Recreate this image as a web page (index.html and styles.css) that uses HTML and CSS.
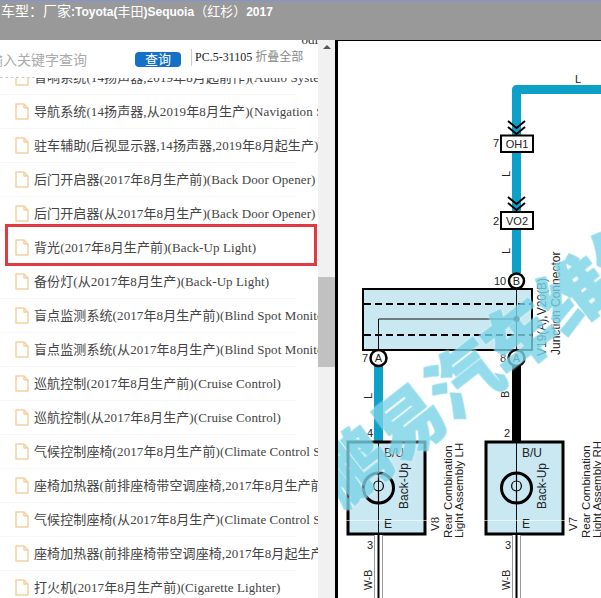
FILE: index.html
```html
<!DOCTYPE html>
<html>
<head>
	<meta http-equiv="Content-Type" content="text/html;charset=UTF-8" />
	<title>车型</title>
	<link rel="stylesheet" href="styles.css">
</head>
<body>
<svg class="defs" width="0" height="0">
	<symbol id="doc" viewBox="0 0 14 17">
		<path d="M1 1H9L13 5V16H1Z M9 1V5H13" fill="#fff" stroke="#f6cfa2" stroke-width="1.5" stroke-linejoin="round"/>
	</symbol>
</svg>
<div class="topbar">
	<div class="car-title">车型：厂家<b>:Toyota(</b><span class="cn">丰田</span><b>)Sequoia</b><span class="cn">（红杉）</span><b>2017</b></div>
</div>
<div class="main">
	<div class="side">
		<div class="side-inner">
			<div class="search">
				<span class="leftover">odi</span>
				<span class="keyword">输入关键字查询</span>
				<span class="btn-query">查询</span>
				<span class="page-code">PC.5-31105</span>
				<span class="fold-all">折叠全部</span>
			</div>
			<div class="list">
				<ul class="tree">
					<li><svg class="ico"><use href="#doc"/></svg>音响系统(14扬声器,2019年8月起前作)(Audio System)</li>
					<li><svg class="ico"><use href="#doc"/></svg>导航系统(14扬声器,从2019年8月生产)(Navigation System)</li>
					<li><svg class="ico"><use href="#doc"/></svg>驻车辅助(后视显示器,14扬声器,2019年8月起生产)</li>
					<li><svg class="ico"><use href="#doc"/></svg>后门开启器(2017年8月生产前)(Back Door Opener)</li>
					<li><svg class="ico"><use href="#doc"/></svg>后门开启器(从2017年8月生产)(Back Door Opener)</li>
					<li><svg class="ico"><use href="#doc"/></svg>背光(2017年8月生产前)(Back-Up Light)<span class="red-box"></span></li>
					<li><svg class="ico"><use href="#doc"/></svg>备份灯(从2017年8月生产)(Back-Up Light)</li>
					<li><svg class="ico"><use href="#doc"/></svg>盲点监测系统(2017年8月生产前)(Blind Spot Monitor)</li>
					<li><svg class="ico"><use href="#doc"/></svg>盲点监测系统(从2017年8月生产)(Blind Spot Monitor)</li>
					<li><svg class="ico"><use href="#doc"/></svg>巡航控制(2017年8月生产前)(Cruise Control)</li>
					<li><svg class="ico"><use href="#doc"/></svg>巡航控制(从2017年8月生产)(Cruise Control)</li>
					<li><svg class="ico"><use href="#doc"/></svg>气候控制座椅(2017年8月生产前)(Climate Control Seat)</li>
					<li><svg class="ico"><use href="#doc"/></svg>座椅加热器(前排座椅带空调座椅,2017年8月生产前)</li>
					<li><svg class="ico"><use href="#doc"/></svg>气候控制座椅(从2017年8月生产)(Climate Control Seat)</li>
					<li><svg class="ico"><use href="#doc"/></svg>座椅加热器(前排座椅带空调座椅,2017年8月起生产)</li>
					<li><svg class="ico"><use href="#doc"/></svg>打火机(2017年8月生产前)(Cigarette Lighter)</li>
				</ul>
			</div>
		</div>
		<div class="scrollbar">
			<div class="arrow"></div>
			<div class="thumb"></div>
		</div>
	</div>
	<div class="pane">
		<svg class="diagram" width="263" height="557" viewBox="338 41 263 557">
			<!-- wires -->
			<path class="w-blue" d="M601 89.5H516.5V273"/>
			<path class="w-blue" d="M378.5 366V442"/>
			<path class="w-black" d="M516.5 366V442"/>

			<!-- junction box -->
			<rect class="box-thin" x="363" y="289" width="169" height="61"/>
			<path class="dash" d="M364 304H531M364 335H531"/>
			<path class="thin" d="M516.5 289V350M516.5 319H378.5V350"/>
			<circle cx="516.5" cy="319" r="3"/>

			<!-- inline connectors -->
			<path class="chev" d="M508 121L516.5 128L525 121M508 127L516.5 134L525 127"/>
			<rect class="conn" x="501" y="135.5" width="32" height="16.5"/>
			<text class="t10" x="517" y="148" text-anchor="middle">OH1</text>
			<text class="t10" x="493" y="147">7</text>
			<path class="chev" d="M508 197L516.5 204L525 197M508 203L516.5 210L525 203"/>
			<rect class="conn" x="501" y="212" width="32" height="17"/>
			<text class="t10" x="517" y="224.5" text-anchor="middle">VO2</text>
			<text class="t10" x="493" y="224.5">2</text>
			<text class="t10" x="575" y="83">L</text>
			<text class="t10" transform="translate(510 177) rotate(-90)">L</text>
			<text class="t10" transform="translate(510 254) rotate(-90)">L</text>
			<text class="t10" transform="translate(372 399) rotate(-90)">L</text>
			<text class="t10" transform="translate(509 398) rotate(-90)">B</text>

			<!-- pins -->
			<circle class="pin" cx="516.5" cy="281" r="7.5"/>
			<text class="t10" x="516.5" y="285" text-anchor="middle">B</text>
			<text class="t10" x="494" y="285">10</text>
			<circle class="pin" cx="378.5" cy="358" r="8"/>
			<text class="t10" x="378.5" y="362" text-anchor="middle">A</text>
			<text class="t10" x="362" y="362">7</text>
			<circle class="pin" cx="516.5" cy="358" r="8"/>
			<text class="t10" x="516.5" y="362" text-anchor="middle">A</text>
			<text class="t10" x="500" y="362">8</text>

			<text class="t11" transform="translate(546 356) rotate(-90)">V19(A),V20(B)</text>
			<text class="t11" transform="translate(560 355) rotate(-90)">Junction Connector</text>

			<!-- lamps -->
			<g>
				<rect class="box" x="348" y="442" width="77" height="92"/>
				<path class="thin" d="M378.5 442V534"/>
				<circle class="lamp" cx="378.5" cy="488" r="15"/>
				<path class="fil" d="M378.5 473V481C372 481 372 491 378.5 491C385 491 385 481 378.5 481M378.5 491V503"/>
				<text class="t11" x="384" y="457">B/U</text>
				<text class="t11" x="384" y="528">E</text>
				<text class="t11" transform="translate(408 509) rotate(-90)">Back-Up</text>
				<path class="w-wb" d="M378.5 535V598"/>
				<path class="w-wb-gap" d="M378.5 535V598"/>
				<path class="w-wb-in" d="M378.5 535V598"/>
				<text class="t10" x="367" y="437">4</text>
				<text class="t10" x="367" y="549">3</text>
				<text class="t11 tsm" transform="translate(372 590) rotate(-90)">W-B</text>
				<text class="t12" transform="translate(439 531) rotate(-90)">V8</text>
				<text class="t12" transform="translate(452 538) rotate(-90)">Rear Combination</text>
				<text class="t12" transform="translate(463 538) rotate(-90)">Light Assembly LH</text>
			</g>
			<g>
				<rect class="box" x="486" y="442" width="77" height="92"/>
				<path class="thin" d="M516.5 442V534"/>
				<circle class="lamp" cx="516.5" cy="488" r="15"/>
				<path class="fil" d="M516.5 473V481C510 481 510 491 516.5 491C523 491 523 481 516.5 481M516.5 491V503"/>
				<text class="t11" x="522" y="457">B/U</text>
				<text class="t11" x="522" y="528">E</text>
				<text class="t11" transform="translate(546 509) rotate(-90)">Back-Up</text>
				<path class="w-wb" d="M516.5 535V598"/>
				<path class="w-wb-gap" d="M516.5 535V598"/>
				<path class="w-wb-in" d="M516.5 535V598"/>
				<text class="t10" x="505" y="549">3</text>
				<text class="t11 tsm" transform="translate(510 590) rotate(-90)">W-B</text>
				<text class="t10" x="504" y="437">2</text>
				<text class="t12" transform="translate(577 531) rotate(-90)">V7</text>
				<text class="t12" transform="translate(590 538) rotate(-90)">Rear Combination</text>
				<text class="t12" transform="translate(601 538) rotate(-90)">Light Assembly RH</text>
			</g>
			<path class="seam" d="M340 520.5H565"/>

			<!-- watermark -->
			<text class="mark" transform="translate(342 508) rotate(-38)">鹏易汽车维修</text>
		</svg>
	</div>
</div>
</body>
</html>
```

FILE: styles.css
```css
html, body {
	margin: 0;
	padding: 0;
	height: 100%;
	overflow: hidden;
	background: #fff;
}
.defs {
	position: absolute;
}
.topbar {
	height: 39px;
	background: #999;
	border-top: 1px solid #8393d8;
}
.car-title {
	padding: 1px 0 0 1px;
	font: 14px/18px "Liberation Sans", "Noto Sans CJK SC", sans-serif;
	color: #fff;
}
.car-title b {
	font-size: 12px;
}
.cn {
	font-size: 13px;
}
.main {
	display: flex;
	height: 558px;
}
.side {
	display: flex;
	width: 335px;
	flex: none;
}
.side-inner {
	width: 318px;
	overflow: hidden;
}
.search {
	position: relative;
	display: flex;
	align-items: center;
	height: 38px;
	overflow: hidden;
	font-family: "Liberation Serif", "Noto Sans CJK SC", serif;
}
.search::after {
	content: "";
	position: absolute;
	left: 0;
	bottom: 0;
	width: 35px;
	border-bottom: 1px dashed #ccc;
}
.leftover {
	position: absolute;
	top: -8px;
	right: 0;
	font-size: 13px;
	color: #333;
}
.keyword {
	margin-left: -11px;
	width: 146px;
	flex: none;
	font-size: 14px;
	color: #aaa;
}
.btn-query {
	width: 46px;
	height: 15px;
	flex: none;
	border-radius: 4px;
	background: #1571c7;
	color: #fff;
	font-size: 13px;
	line-height: 15px;
	text-align: center;
}
.page-code {
	margin: -4px 0 0 10px;
	padding-left: 3px;
	border-left: 1px solid #ccc;
	font-size: 12px;
	line-height: 17px;
	color: #222;
}
.fold-all {
	margin: -6px 0 0 3px;
	font-size: 12px;
	color: #888;
}
.list {
	height: 520px;
	overflow: hidden;
}
.tree {
	list-style: none;
	margin: -17px 0 0 0;
	padding: 0;
	width: 297px;
}
.tree li {
	position: relative;
	display: flex;
	align-items: center;
	height: 33px;
	border-bottom: 1px solid #f6f6f6;
	padding-left: 15px;
	font: 13px/18px "Liberation Serif", "Noto Sans CJK SC", serif;
	letter-spacing: 0.1px;
	color: #444;
	white-space: nowrap;
}
.ico {
	width: 14px;
	height: 17px;
	margin-right: 5px;
	flex: none;
}
.red-box {
	position: absolute;
	left: 5px;
	top: -7px;
	width: 306px;
	height: 36px;
	border: 3px solid #e23a40;
}
.scrollbar {
	position: relative;
	width: 17px;
	background: #f1f1f1;
}
.arrow {
	margin: 5px auto 0;
	width: 0;
	height: 0;
	border-left: 4px solid transparent;
	border-right: 4px solid transparent;
	border-bottom: 4px solid #555;
}
.thumb {
	margin-top: 228px;
	height: 90px;
	background: #c1c1c1;
}
.pane {
	flex: 1;
	border-left: 3px solid #000;
	border-top: 1px solid #000;
	overflow: hidden;
}
.diagram {
	display: block;
	font-family: "Liberation Sans", sans-serif;
	fill: #222;
}
.w-blue {
	fill: none;
	stroke: #0da0c8;
	stroke-width: 9;
	stroke-linejoin: round;
}
.w-black {
	stroke: #000;
	stroke-width: 9;
}
.box-thin {
	fill: #c9e8f2;
	stroke: #000;
	stroke-width: 2;
}
.box {
	fill: #c9e8f2;
	stroke: #000;
	stroke-width: 3;
}
.dash {
	fill: none;
	stroke: #000;
	stroke-width: 2;
	stroke-dasharray: 7 4;
}
.thin {
	fill: none;
	stroke: #111;
	stroke-width: 1;
}
.chev {
	fill: none;
	stroke: #000;
	stroke-width: 2;
}
.conn {
	fill: #fff;
	stroke: #000;
	stroke-width: 2;
}
.pin {
	fill: #fff;
	stroke: #000;
	stroke-width: 2.5;
}
.lamp {
	fill: none;
	stroke: #000;
	stroke-width: 3;
}
.fil {
	fill: none;
	stroke: #000;
	stroke-width: 1.2;
}
.w-wb {
	stroke: #999;
	stroke-width: 9;
}
.w-wb-gap {
	stroke: #fff;
	stroke-width: 7;
}
.w-wb-in {
	stroke: #000;
	stroke-width: 2;
}
.seam {
	stroke: #fff;
	stroke-opacity: 0.6;
	stroke-width: 1;
}
.t10 {
	font-size: 11px;
}
.t11 {
	font-size: 12px;
}
.tsm {
	font-size: 10.5px;
}
.t12 {
	font-size: 11.5px;
}
.mark {
	font-family: "Noto Sans CJK SC", sans-serif;
	font-size: 70px;
	font-weight: 900;
	letter-spacing: 0;
	fill: #7ad4e7;
	stroke: #7ad4e7;
	stroke-width: 1.5;
	stroke-linejoin: round;
	opacity: 0.8;
	filter: drop-shadow(0 0 1px #fff);
}
```
